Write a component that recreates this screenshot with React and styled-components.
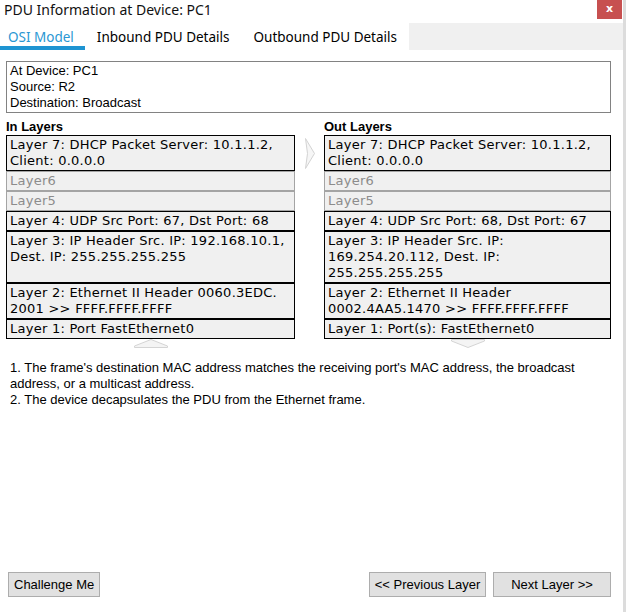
import React from "react";
import styled, { createGlobalStyle } from "styled-components";

const GlobalStyle = createGlobalStyle`
  html, body {
    margin: 0;
    padding: 0;
    background: #fff;
  }
  * {
    box-sizing: border-box;
  }
`;

const inLayers = [
  { id: 7, lines: ["Layer 7: DHCP Packet Server: 10.1.1.2,", "Client: 0.0.0.0"] },
  { id: 6, lines: ["Layer6"], dim: true },
  { id: 5, lines: ["Layer5"], dim: true },
  { id: 4, lines: ["Layer 4: UDP Src Port: 67, Dst Port: 68"] },
  { id: 3, lines: ["Layer 3: IP Header Src. IP: 192.168.10.1,", "Dest. IP: 255.255.255.255"] },
  { id: 2, lines: ["Layer 2: Ethernet II Header 0060.3EDC.", "2001 >> FFFF.FFFF.FFFF"] },
  { id: 1, lines: ["Layer 1: Port FastEthernet0"] },
];

const outLayers = [
  { id: 7, lines: ["Layer 7: DHCP Packet Server: 10.1.1.2,", "Client: 0.0.0.0"] },
  { id: 6, lines: ["Layer6"], dim: true },
  { id: 5, lines: ["Layer5"], dim: true },
  { id: 4, lines: ["Layer 4: UDP Src Port: 68, Dst Port: 67"] },
  { id: 3, lines: ["Layer 3: IP Header Src. IP:", "169.254.20.112, Dest. IP:", "255.255.255.255"] },
  { id: 2, lines: ["Layer 2: Ethernet II Header", "0002.4AA5.1470 >> FFFF.FFFF.FFFF"] },
  { id: 1, lines: ["Layer 1: Port(s): FastEthernet0"] },
];

function RightArrow() {
  return (
    <svg width="11" height="31" viewBox="0 0 11 31">
      <polygon points="0.5,0.5 9.5,15.5 0.5,30.5 2.5,15.5" fill="#f6f6f6" stroke="#d2d2d2" />
    </svg>
  );
}

function UpArrow() {
  return (
    <svg width="34" height="9" viewBox="0 0 34 9">
      <polygon points="0.5,8.5 0.5,7 17,0.5 33.5,7 33.5,8.5" fill="#f4f4f4" stroke="#d4d4d4" />
    </svg>
  );
}

function DownArrow() {
  return (
    <svg width="34" height="9" viewBox="0 0 34 9">
      <polygon points="0.5,0.5 33.5,0.5 33.5,2 17,8.5 0.5,2" fill="#f4f4f4" stroke="#d4d4d4" />
    </svg>
  );
}

function LayerText({ lines }) {
  return lines.map((line, i) => (
    <React.Fragment key={i}>
      {i > 0 && <br />}
      {line}
    </React.Fragment>
  ));
}

export default function App() {
  return (
    <Window>
      <GlobalStyle />
      <TitleBar>
        <Title>PDU Information at Device: PC1</Title>
        <CloseButton>x</CloseButton>
      </TitleBar>
      <TabStrip>
        <Tab $active $first>OSI Model</Tab>
        <Tab>Inbound PDU Details</Tab>
        <Tab>Outbound PDU Details</Tab>
      </TabStrip>
      <Content>
        <InfoBox>
          At Device: PC1
          <br />
          Source: R2
          <br />
          Destination: Broadcast
        </InfoBox>
        <LayerGrid>
          <ColumnHeading>In Layers</ColumnHeading>
          <span />
          <ColumnHeading>Out Layers</ColumnHeading>
          {inLayers.map((layer, i) => (
            <React.Fragment key={layer.id}>
              <LayerBox $dim={layer.dim}>
                <LayerText lines={layer.lines} />
              </LayerBox>
              <ArrowCell>{i === 0 && <RightArrow />}</ArrowCell>
              <LayerBox $dim={outLayers[i].dim}>
                <LayerText lines={outLayers[i].lines} />
              </LayerBox>
            </React.Fragment>
          ))}
          <ArrowRow>
            <UpArrow />
          </ArrowRow>
          <span />
          <ArrowRow>
            <DownArrow />
          </ArrowRow>
        </LayerGrid>
        <Description>
          1. The frame's destination MAC address matches the receiving port's MAC address, the broadcast
          address, or a multicast address.
          <br />
          2. The device decapsulates the PDU from the Ethernet frame.
        </Description>
        <Footer>
          <Button $first>Challenge Me</Button>
          <Spacer />
          <Button $width={117}>&lt;&lt; Previous Layer</Button>
          <Button $width={118}>Next Layer &gt;&gt;</Button>
        </Footer>
      </Content>
    </Window>
  );
}

const Window = styled.div`
  width: 626px;
  height: 612px;
  display: flex;
  flex-direction: column;
  background: #fff;
  border-right: 3px solid #dcdcdc;
  overflow: hidden;
`;

const TitleBar = styled.div`
  height: 23px;
  display: flex;
  justify-content: space-between;
  align-items: flex-start;
`;

const Title = styled.div`
  font-family: "Noto Sans", sans-serif;
  font-size: 14px;
  line-height: 19px;
  padding-left: 4px;
  color: #111;
`;

const CloseButton = styled.div`
  width: 25px;
  height: 19px;
  margin-right: 1px;
  background: #c75050;
  color: #fff;
  display: flex;
  align-items: center;
  justify-content: center;
  font: bold 11px "DejaVu Sans", Verdana, sans-serif;
  padding-bottom: 2px;
`;

const TabStrip = styled.div`
  height: 27px;
  display: flex;
  background: #f0f0f0;
`;

const Tab = styled.div`
  display: flex;
  align-items: center;
  background: #fff;
  padding: 4px 12px 0 ${(p) => (p.$first ? "8px" : "12px")};
  padding-right: ${(p) => (p.$first ? "11px" : "12px")};
  border-bottom: 4px solid ${(p) => (p.$active ? "#1e94d2" : "#fff")};
  font-family: "Noto Sans", sans-serif;
  font-size: 13.5px;
  color: ${(p) => (p.$active ? "#2a97d3" : "#000")};
  white-space: nowrap;
`;

const Content = styled.div`
  flex: 1;
  display: flex;
  flex-direction: column;
  padding: 0 12px 15px 6px;
`;

const InfoBox = styled.div`
  margin-top: 11px;
  height: 52px;
  border: 1px solid #828282;
  padding: 1px 3px;
  font: 13px/16px "Liberation Sans", Arial, sans-serif;
  color: #000;
`;

const LayerGrid = styled.div`
  display: grid;
  grid-template-columns: 289px 29px 287px;
  margin-top: 6px;
`;

const ColumnHeading = styled.div`
  font: bold 13px/16px "Liberation Sans", Arial, sans-serif;
  color: #000;
`;

const LayerBox = styled.div`
  background: #f0f0f0;
  border: 1px solid ${(p) => (p.$dim ? "#a4a4a4" : "#000")};
  color: ${(p) => (p.$dim ? "#8c8c8c" : "#000")};
  padding: 1px 3px;
  font: 13px/16px "DejaVu Sans", Verdana, sans-serif;
  letter-spacing: 0.25px;
  white-space: nowrap;
`;

const ArrowCell = styled.div`
  display: flex;
  align-items: center;
  justify-content: center;
  padding-left: 1px;
`;

const ArrowRow = styled.div`
  display: flex;
  justify-content: center;
  height: 9px;
`;

const Description = styled.div`
  margin-top: 12px;
  padding-left: 4px;
  font: 13px/16px "Liberation Sans", Arial, sans-serif;
  color: #000;
`;

const Footer = styled.div`
  margin-top: auto;
  display: flex;
  gap: 7px;
`;

const Spacer = styled.div`
  flex: 1;
`;

const Button = styled.div`
  height: 25px;
  width: ${(p) => (p.$width ? `${p.$width}px` : "auto")};
  margin-left: ${(p) => (p.$first ? "2px" : "0")};
  padding: 0 5px;
  display: flex;
  align-items: center;
  justify-content: center;
  background: #e1e1e1;
  border: 1px solid #adadad;
  font: 13px "Liberation Sans", Arial, sans-serif;
  color: #000;
  white-space: nowrap;
`;
